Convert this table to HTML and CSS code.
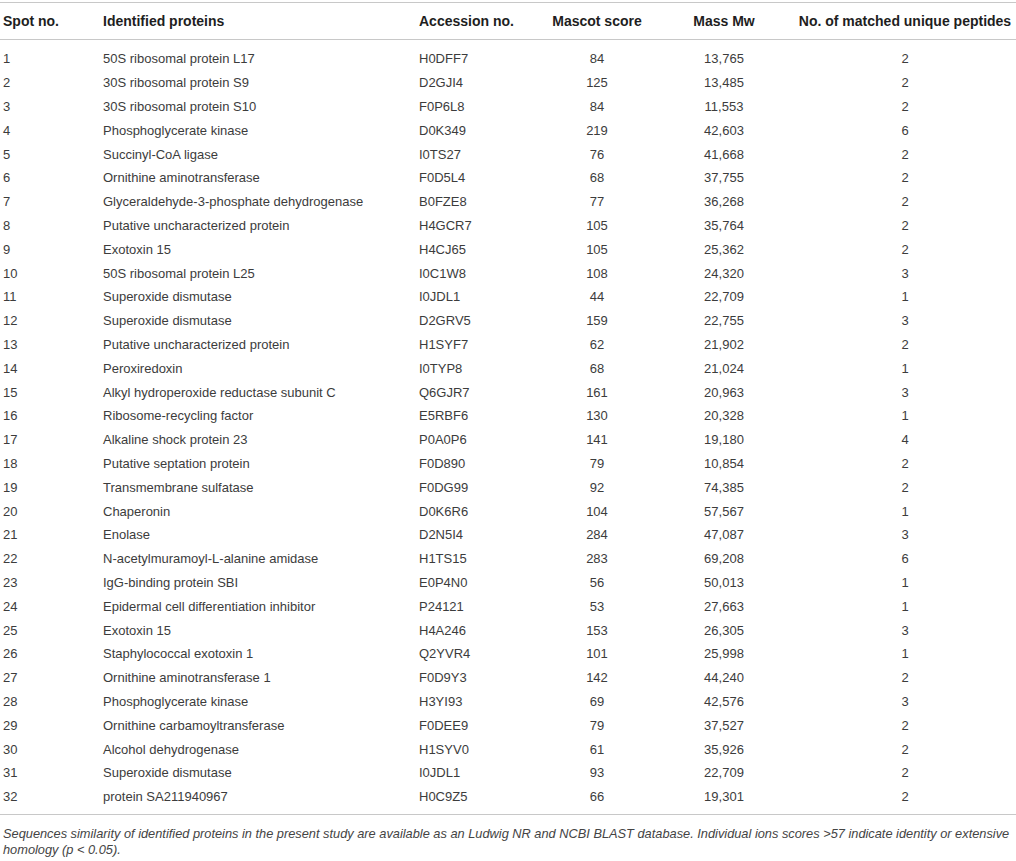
FILE: index.html
```html
<!DOCTYPE html>
<html lang="en">
<head>
<meta charset="utf-8">
<title>Identified proteins</title>
<link rel="stylesheet" href="styles.css">
</head>
<body>
<div class="wrap">
<table class="ptable">
  <colgroup>
    <col class="c1"><col class="c2"><col class="c3"><col class="c4"><col class="c5"><col class="c6">
  </colgroup>
  <thead>
    <tr>
      <th class="l">Spot no.</th>
      <th class="l">Identified proteins</th>
      <th class="l">Accession no.</th>
      <th>Mascot score</th>
      <th>Mass Mw</th>
      <th>No. of matched unique peptides</th>
    </tr>
  </thead>
  <tbody>
    <tr><td class="l">1</td><td class="l">50S ribosomal protein L17</td><td class="l">H0DFF7</td><td>84</td><td>13,765</td><td>2</td></tr>
    <tr><td class="l">2</td><td class="l">30S ribosomal protein S9</td><td class="l">D2GJI4</td><td>125</td><td>13,485</td><td>2</td></tr>
    <tr><td class="l">3</td><td class="l">30S ribosomal protein S10</td><td class="l">F0P6L8</td><td>84</td><td>11,553</td><td>2</td></tr>
    <tr><td class="l">4</td><td class="l">Phosphoglycerate kinase</td><td class="l">D0K349</td><td>219</td><td>42,603</td><td>6</td></tr>
    <tr><td class="l">5</td><td class="l">Succinyl-CoA ligase</td><td class="l">I0TS27</td><td>76</td><td>41,668</td><td>2</td></tr>
    <tr><td class="l">6</td><td class="l">Ornithine aminotransferase</td><td class="l">F0D5L4</td><td>68</td><td>37,755</td><td>2</td></tr>
    <tr><td class="l">7</td><td class="l">Glyceraldehyde-3-phosphate dehydrogenase</td><td class="l">B0FZE8</td><td>77</td><td>36,268</td><td>2</td></tr>
    <tr><td class="l">8</td><td class="l">Putative uncharacterized protein</td><td class="l">H4GCR7</td><td>105</td><td>35,764</td><td>2</td></tr>
    <tr><td class="l">9</td><td class="l">Exotoxin 15</td><td class="l">H4CJ65</td><td>105</td><td>25,362</td><td>2</td></tr>
    <tr><td class="l">10</td><td class="l">50S ribosomal protein L25</td><td class="l">I0C1W8</td><td>108</td><td>24,320</td><td>3</td></tr>
    <tr><td class="l">11</td><td class="l">Superoxide dismutase</td><td class="l">I0JDL1</td><td>44</td><td>22,709</td><td>1</td></tr>
    <tr><td class="l">12</td><td class="l">Superoxide dismutase</td><td class="l">D2GRV5</td><td>159</td><td>22,755</td><td>3</td></tr>
    <tr><td class="l">13</td><td class="l">Putative uncharacterized protein</td><td class="l">H1SYF7</td><td>62</td><td>21,902</td><td>2</td></tr>
    <tr><td class="l">14</td><td class="l">Peroxiredoxin</td><td class="l">I0TYP8</td><td>68</td><td>21,024</td><td>1</td></tr>
    <tr><td class="l">15</td><td class="l">Alkyl hydroperoxide reductase subunit C</td><td class="l">Q6GJR7</td><td>161</td><td>20,963</td><td>3</td></tr>
    <tr><td class="l">16</td><td class="l">Ribosome-recycling factor</td><td class="l">E5RBF6</td><td>130</td><td>20,328</td><td>1</td></tr>
    <tr><td class="l">17</td><td class="l">Alkaline shock protein 23</td><td class="l">P0A0P6</td><td>141</td><td>19,180</td><td>4</td></tr>
    <tr><td class="l">18</td><td class="l">Putative septation protein</td><td class="l">F0D890</td><td>79</td><td>10,854</td><td>2</td></tr>
    <tr><td class="l">19</td><td class="l">Transmembrane sulfatase</td><td class="l">F0DG99</td><td>92</td><td>74,385</td><td>2</td></tr>
    <tr><td class="l">20</td><td class="l">Chaperonin</td><td class="l">D0K6R6</td><td>104</td><td>57,567</td><td>1</td></tr>
    <tr><td class="l">21</td><td class="l">Enolase</td><td class="l">D2N5I4</td><td>284</td><td>47,087</td><td>3</td></tr>
    <tr><td class="l">22</td><td class="l">N-acetylmuramoyl-L-alanine amidase</td><td class="l">H1TS15</td><td>283</td><td>69,208</td><td>6</td></tr>
    <tr><td class="l">23</td><td class="l">IgG-binding protein SBI</td><td class="l">E0P4N0</td><td>56</td><td>50,013</td><td>1</td></tr>
    <tr><td class="l">24</td><td class="l">Epidermal cell differentiation inhibitor</td><td class="l">P24121</td><td>53</td><td>27,663</td><td>1</td></tr>
    <tr><td class="l">25</td><td class="l">Exotoxin 15</td><td class="l">H4A246</td><td>153</td><td>26,305</td><td>3</td></tr>
    <tr><td class="l">26</td><td class="l">Staphylococcal exotoxin 1</td><td class="l">Q2YVR4</td><td>101</td><td>25,998</td><td>1</td></tr>
    <tr><td class="l">27</td><td class="l">Ornithine aminotransferase 1</td><td class="l">F0D9Y3</td><td>142</td><td>44,240</td><td>2</td></tr>
    <tr><td class="l">28</td><td class="l">Phosphoglycerate kinase</td><td class="l">H3YI93</td><td>69</td><td>42,576</td><td>3</td></tr>
    <tr><td class="l">29</td><td class="l">Ornithine carbamoyltransferase</td><td class="l">F0DEE9</td><td>79</td><td>37,527</td><td>2</td></tr>
    <tr><td class="l">30</td><td class="l">Alcohol dehydrogenase</td><td class="l">H1SYV0</td><td>61</td><td>35,926</td><td>2</td></tr>
    <tr><td class="l">31</td><td class="l">Superoxide dismutase</td><td class="l">I0JDL1</td><td>93</td><td>22,709</td><td>2</td></tr>
    <tr><td class="l">32</td><td class="l">protein SA211940967</td><td class="l">H0C9Z5</td><td>66</td><td>19,301</td><td>2</td></tr>
  </tbody>
</table>
<p class="caption">Sequences similarity of identified proteins in the present study are available as an Ludwig NR and NCBI BLAST database. Individual ions scores &gt;57 indicate identity or extensive homology (p &lt; 0.05).</p>
</div>
</body>
</html>
```

FILE: styles.css
```css
html, body {
  margin: 0;
  padding: 0;
  background: #ffffff;
}

.wrap {
  width: 1016px;
  padding-top: 2px;
  font-family: "Liberation Sans", Arial, Helvetica, sans-serif;
}

.ptable {
  width: 1016px;
  border-collapse: collapse;
  table-layout: fixed;
  border-top: 1px solid #c8c8c8;
  border-bottom: 1px solid #c8c8c8;
}

.c1 { width: 100px; }
.c2 { width: 316px; }
.c3 { width: 124px; }
.c4 { width: 114px; }
.c5 { width: 140px; }
.c6 { width: 222px; }

.ptable th {
  font-size: 14px;
  font-weight: bold;
  color: #1e1e1e;
  height: 36px;
  padding: 0 3px;
  text-align: center;
  vertical-align: middle;
  white-space: nowrap;
  border-bottom: 1px solid #c8c8c8;
}

.ptable td {
  font-size: 13px;
  color: #3c3c3c;
  height: 23.8px;
  padding: 0 3px;
  text-align: center;
  vertical-align: middle;
  white-space: nowrap;
}

.ptable .l {
  text-align: left;
}

.ptable tbody tr:first-child td {
  padding-top: 7px;
}

.ptable tbody tr:last-child td {
  padding-bottom: 5px;
}

.caption {
  margin: 0;
  padding: 11px 2px 0 3px;
  font-size: 12.8px;
  line-height: 16px;
  font-style: italic;
  color: #444444;
}
```
